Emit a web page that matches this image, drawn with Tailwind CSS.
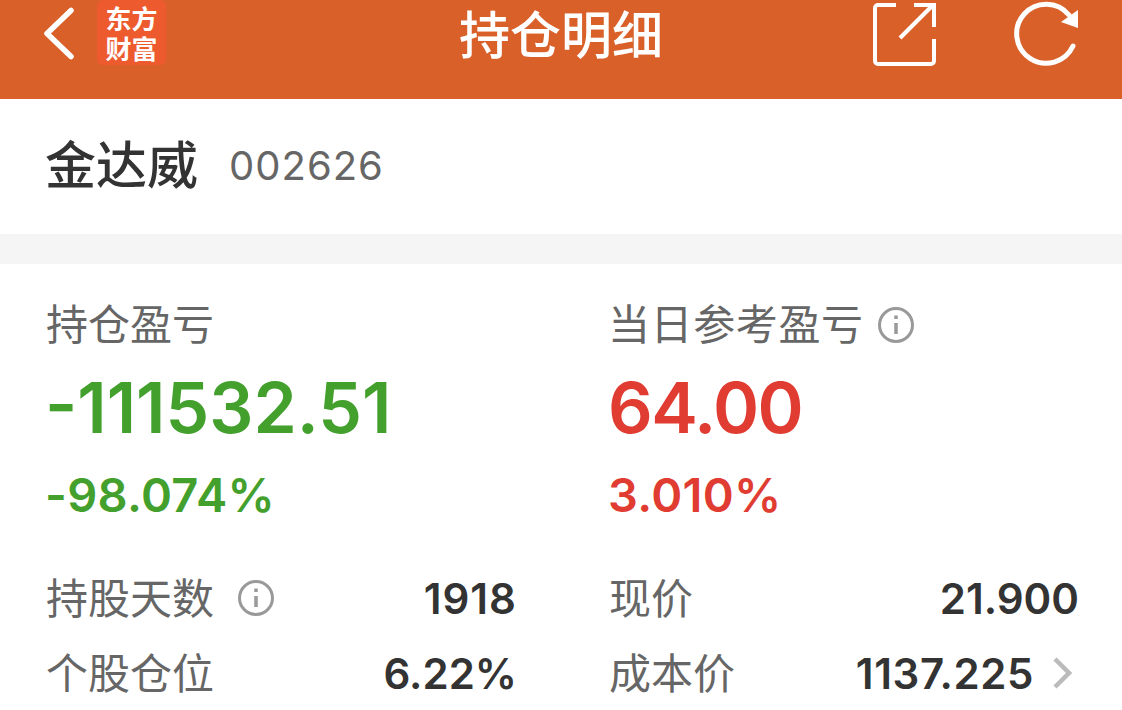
<!DOCTYPE html>
<html lang="zh-CN">
<head>
    <meta charset="UTF-8">
    <meta name="viewport" content="width=device-width, initial-scale=1.0">
    <title>持仓明细</title>
    <script src="https://cdn.jsdelivr.net/npm/@tailwindcss/browser@4"></script>
</head>
<body class="bg-white h-[710px] overflow-hidden font-['Inter','Noto_Sans_CJK_SC',sans-serif]">
    <!-- Header -->
    <header class="h-[99px] bg-[#d96028] text-white flex items-start px-[43px]">
        <div class="flex-1 flex items-start">
            <svg class="shrink-0 mt-[6px] w-[32px] h-[54px]" viewBox="0 0 32 54" fill="none" stroke="white" stroke-width="5.5" stroke-linecap="round" stroke-linejoin="round">
                <path d="M28 4.5 L4 27.5 L28 50.5"/>
            </svg>
            <div class="shrink-0 ml-[22px] w-[69px] h-[65px] rounded-[6px] bg-[#ec5a2e] flex flex-col items-center justify-center text-[26px] leading-[30px] font-bold font-['Noto_Sans_CJK_SC',sans-serif]">
                <span>东方</span>
                <span>财富</span>
            </div>
        </div>
        <h1 class="text-[51px] leading-[54px] mt-[5px] font-medium font-['Noto_Sans_CJK_SC',sans-serif]">持仓明细</h1>
        <div class="flex-1 flex items-start justify-end">
            <svg class="w-[64px] h-[66px]" viewBox="0 0 64 66" fill="none" stroke="white" stroke-width="4">
                <path d="M23 5 H5 a3 3 0 0 0 -3 3 V61 a3 3 0 0 0 3 3 H58 a3 3 0 0 0 3 -3 V39"/>
                <path d="M27 38 L60 5"/>
                <path d="M41 5 H61 V27"/>
            </svg>
            <svg class="ml-[76px] w-[66px] h-[66px]" viewBox="0 0 66 66" fill="none">
                <path d="M60 46 A29.5 29.5 0 1 1 56 15" stroke="white" stroke-width="5" stroke-linecap="round"/>
                <path d="M48 22 L65 10 L65 28 Z" fill="white"/>
            </svg>
        </div>
    </header>

    <!-- Stock name -->
    <section class="h-[135px] flex items-start pl-[46px] pt-[33px]">
        <span class="-ml-px text-[51px] leading-[60px] font-medium text-[#333] font-['Noto_Sans_CJK_SC',sans-serif]">金达威</span>
        <span class="ml-[31px] mt-[12px] text-[40px] leading-[44px] text-[#666] tracking-[1px]">002626</span>
    </section>

    <div class="h-[30px] bg-[#f5f5f5]"></div>

    <!-- Position -->
    <section class="grid grid-cols-[562px_1fr] pl-[46px] pr-[43px] pt-[33px]">
        <div>
            <div class="text-[42px] leading-[50px] text-[#666] font-['Noto_Sans_CJK_SC',sans-serif]">持仓盈亏</div>
            <div class="-ml-px mt-[21px] text-[69.5px] leading-[80px] font-semibold text-[#43a02d]">-111532.51</div>
            <div class="-ml-px mt-[19px] text-[47px] leading-[56px] font-semibold text-[#43a02d] tracking-[0.3px]">-98.074%</div>
        </div>
        <div>
            <div class="flex items-center">
                <span class="text-[42px] leading-[50px] text-[#666] tracking-[0.6px] font-['Noto_Sans_CJK_SC',sans-serif]">当日参考盈亏</span>
                <svg class="ml-[13px] mt-[6px] w-[38px] h-[38px]" viewBox="0 0 38 38" fill="none" stroke="#999">
                    <circle cx="19" cy="19" r="16.5" stroke-width="3"/>
                    <path d="M19 17 V28" stroke-width="3.5"/>
                    <path d="M19 9.5 V13" stroke-width="3.5"/>
                </svg>
            </div>
            <div class="mt-[21px] text-[70px] leading-[80px] font-semibold text-[#e03c32] tracking-[-1.5px]">64.00</div>
            <div class="mt-[19px] text-[47px] leading-[56px] font-semibold text-[#e03c32] tracking-[0.3px]">3.010%</div>
        </div>
    </section>

    <section class="grid grid-cols-[471px_1fr] gap-x-[92px] pl-[46px] pr-[43px] pt-[50px] gap-y-[25px] text-[#333]">
        <div class="flex items-center justify-between h-[50px]">
            <div class="flex items-center">
                <span class="mb-[5px] text-[42px] leading-[50px] text-[#666] font-['Noto_Sans_CJK_SC',sans-serif]">持股天数</span>
                <svg class="ml-[23px] w-[38px] h-[38px]" viewBox="0 0 38 38" fill="none" stroke="#999">
                    <circle cx="19" cy="19" r="16.5" stroke-width="3"/>
                    <path d="M19 17 V28" stroke-width="3.5"/>
                    <path d="M19 9.5 V13" stroke-width="3.5"/>
                </svg>
            </div>
            <span class="text-[42px] font-semibold tracking-[1px]">1918</span>
        </div>
        <div class="flex items-center justify-between h-[50px]">
            <span class="mb-[5px] text-[42px] leading-[50px] text-[#666] font-['Noto_Sans_CJK_SC',sans-serif]">现价</span>
            <span class="text-[42px] font-semibold">21.900</span>
        </div>
        <div class="flex items-center justify-between h-[50px]">
            <span class="mb-[5px] text-[42px] leading-[50px] text-[#666] font-['Noto_Sans_CJK_SC',sans-serif]">个股仓位</span>
            <span class="text-[42px] font-semibold">6.22%</span>
        </div>
        <div class="flex items-center justify-between h-[50px]">
            <span class="mb-[5px] text-[42px] leading-[50px] text-[#666] font-['Noto_Sans_CJK_SC',sans-serif]">成本价</span>
            <div class="flex items-center">
                <span class="text-[42px] font-semibold tracking-[0.6px]">1137.225</span>
                <svg class="ml-[18px] mr-[7px] w-[20px] h-[34px]" viewBox="0 0 20 34" fill="none" stroke="#bbb" stroke-width="4.5">
                    <path d="M3 3 L17 17 L3 31"/>
                </svg>
            </div>
        </div>
    </section>
</body>
</html>
